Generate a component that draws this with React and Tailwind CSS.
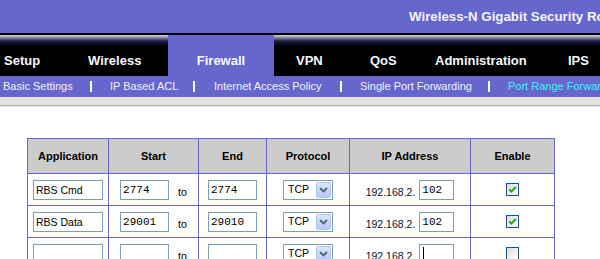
import * as React from 'react';

const ROWS = [
  { app: 'RBS Cmd', start: '2774', end: '2774', ip: '102', on: true },
  { app: 'RBS Data', start: '29001', end: '29010', ip: '102', on: true },
  { app: '', start: '', end: '', ip: '', on: false, caret: true },
];

const HEADERS = ['Application', 'Start', 'End', 'Protocol', 'IP Address', 'Enable'];

const cell = 'border-r border-b border-[#6666cc] flex items-center justify-center h-[32px]';
const box = 'h-[20px] border border-[#7f9db9] bg-white text-black outline-none';

function Field({ value, width, mono }) {
  return (
    <input
      readOnly
      value={value}
      className={`${box} ${width} px-[2px] ${mono ? "font-['Liberation_Mono',monospace] text-[11px]" : 'text-[10.5px]'}`}
    />
  );
}

function ProtocolSelect() {
  return (
    <div className={`${box} w-[50px] flex items-center justify-between pl-[4px] pr-[1px] text-[10.5px]`}>
      <span>TCP</span>
      <span className="w-[15px] h-[16px] rounded-[2px] border border-[#b3c6f2] bg-[linear-gradient(to_bottom,#dce6fd,#b5c9f6)] flex items-center justify-center">
        <svg width="9" height="6" viewBox="0 0 9 6">
          <path d="M1 1 L4.5 4.5 L8 1" fill="none" stroke="#4d6185" strokeWidth="1.8" />
        </svg>
      </span>
    </div>
  );
}

function Checkbox({ on }) {
  return (
    <div className="w-[13px] h-[13px] border border-[#1c5180] bg-[linear-gradient(135deg,#dcdcd7,#ffffff)] flex items-center justify-center">
      {on && (
        <svg width="9" height="9" viewBox="0 0 9 9">
          <path d="M1.2 4.3 L3.4 6.6 L7.8 2" fill="none" stroke="#21a121" strokeWidth="2" />
        </svg>
      )}
    </div>
  );
}

export default function App() {
  return (
    <div className="w-[600px] h-[259px] overflow-hidden bg-white font-['Liberation_Sans',Arial,sans-serif]">
      {/* Title bar */}
      <div className="h-[33px] bg-[#6666cc] flex items-center pl-[409px] whitespace-nowrap text-[13.3px] font-bold text-[#f4f4ff]">
        Wireless-N Gigabit Security Router with VPN
      </div>
      <div className="h-[2px] bg-black" />

      {/* Main nav */}
      <div className="h-[41px] flex whitespace-nowrap text-[13px] font-bold text-[#f8f8ff] bg-[linear-gradient(to_bottom,#d8d8d8_0px,#9c9caa_2px,#5c5c7a_4px,#1e1e4a_6px,#0a0a2a_9px,#000_11px)]">
        <div className="w-[88px] shrink-0 pl-[4px] pt-[10px] flex items-center">Setup</div>
        <div className="w-[80px] shrink-0 pt-[10px] flex items-center">Wireless</div>
        <div className="w-[106px] shrink-0 pt-[10px] flex items-center justify-center bg-[#6666cc]">Firewall</div>
        <div className="w-[96px] shrink-0 pl-[22px] pt-[10px] flex items-center">VPN</div>
        <div className="w-[65px] shrink-0 pt-[10px] flex items-center">QoS</div>
        <div className="w-[133px] shrink-0 pt-[10px] flex items-center">Administration</div>
        <div className="flex-1 pt-[10px] flex items-center">IPS</div>
      </div>

      {/* Sub nav */}
      <div className="h-[21px] bg-[#6666cc] flex items-center whitespace-nowrap text-[11px] text-[#f2f2ff] pl-[3px]">
        <span className="w-[87px] shrink-0">Basic Settings</span>
        <span className="w-[2px] h-[11px] shrink-0 bg-white" />
        <span className="ml-[18px] w-[83px] shrink-0">IP Based ACL</span>
        <span className="w-[2px] h-[11px] shrink-0 bg-white" />
        <span className="ml-[19px] w-[126px] shrink-0">Internet Access Policy</span>
        <span className="w-[2px] h-[11px] shrink-0 bg-white" />
        <span className="ml-[18px] w-[128px] shrink-0">Single Port Forwarding</span>
        <span className="w-[2px] h-[11px] shrink-0 bg-white" />
        <span className="ml-[18px] shrink-0 text-[#44eeff]">Port Range Forwarding</span>
      </div>
      <div className="h-[8px] bg-[#e2e2e2]" />
      <div className="h-[1px] bg-[#b4b4b4]" />
      <div className="h-[1px] bg-[#e4e4e4]" />

      {/* Port range table */}
      <div className="ml-[27px] mt-[31px] w-max grid grid-cols-[81px_90px_68px_83px_121px_84px] border-l border-t border-[#6666cc]">
        {HEADERS.map((h) => (
          <div key={h} className="border-r border-b border-[#6666cc] bg-[#cccccc] h-[35px] flex items-center justify-center text-[11px] font-bold text-black">
            {h}
          </div>
        ))}
        {ROWS.map((r, i) => (
          <React.Fragment key={i}>
            <div className={`${cell} !justify-start pl-[5px]`}>
              <Field value={r.app} width="w-[70px]" />
            </div>
            <div className={`${cell} gap-[9px]`}>
              <Field value={r.start} width="w-[49px]" mono />
              <span className="mt-[7px] text-[10.5px] text-black">to</span>
            </div>
            <div className={cell}>
              <Field value={r.end} width="w-[49px]" mono />
            </div>
            <div className={cell}>
              <ProtocolSelect />
            </div>
            <div className={`${cell} gap-[4px]`}>
              <span className="mt-[7px] text-[10.5px] text-[#10102a]">192.168.2.</span>
              {r.caret ? (
                <div className={`${box} w-[35px] flex items-center pl-[3px]`}>
                  <span className="w-[1px] h-[14px] bg-black" />
                </div>
              ) : (
                <Field value={r.ip} width="w-[35px]" mono />
              )}
            </div>
            <div className={cell}>
              <Checkbox on={r.on} />
            </div>
          </React.Fragment>
        ))}
      </div>
    </div>
  );
}
